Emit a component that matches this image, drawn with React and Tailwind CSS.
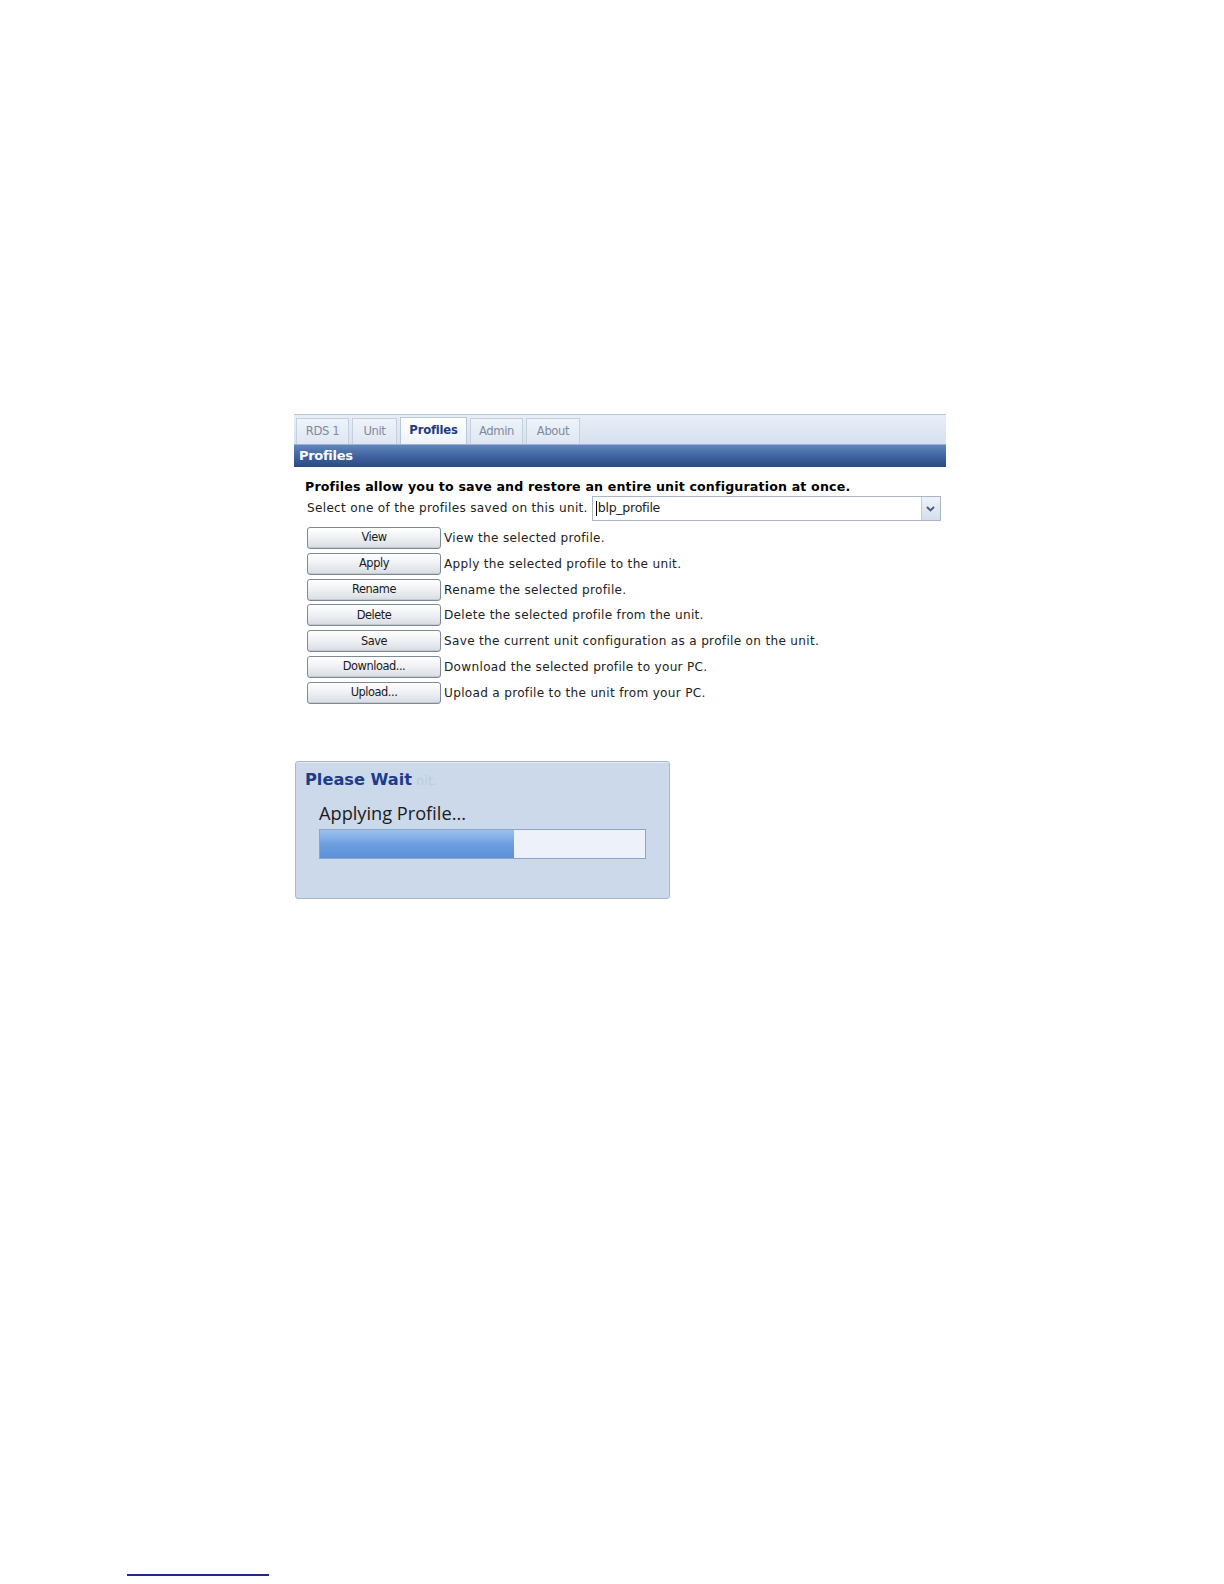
/**
 * Profiles page — tabbed unit configuration screen with a "Please Wait" dialog below.
 */

const TABS = [
  ["RDS 1", "w-[53px]"],
  ["Unit", "w-[45px]"],
  ["Profiles", "w-[67px]"],
  ["Admin", "w-[53px]"],
  ["About", "w-[54px]"],
];

const ACTIONS = [
  ["View", "View the selected profile."],
  ["Apply", "Apply the selected profile to the unit."],
  ["Rename", "Rename the selected profile."],
  ["Delete", "Delete the selected profile from the unit."],
  ["Save", "Save the current unit configuration as a profile on the unit."],
  ["Download...", "Download the selected profile to your PC."],
  ["Upload...", "Upload a profile to the unit from your PC."],
];

export default function App() {
  return (
    <div
      className="relative w-full h-[1584px] overflow-hidden bg-white text-black"
      style={{ fontFamily: '"DejaVu Sans", Verdana, sans-serif' }}
    >
      <div className="pt-[414px] pl-[294px]">
        <ProfilesPanel />
        <PleaseWait />
      </div>

      {/* footnote rule at the bottom of the page */}
      <div className="absolute left-[127px] top-[1574px] w-[142px] h-[2px] bg-[#1c2a8a]" />
    </div>
  );
}

function ProfilesPanel() {
  return (
    <div className="w-[652px]">
      {/* Tab strip */}
      <div className="flex items-end gap-[3px] h-[30px] pl-[2px] border-t border-[#b8c4d4] bg-gradient-to-b from-[#e9eef6] to-[#d6e0ee]">
        {TABS.map(([t, w]) => {
          const active = t === "Profiles";
          return (
            <div
              key={t}
              className={
                (active
                  ? "h-[27px] border-[#b9c7da] from-white to-[#eef3fa] font-bold text-[#1f3d7a] tracking-[-0.2px] "
                  : "h-[26px] border-[#c5d0de] from-[#eef3f9] to-[#dfe7f2] text-[#7d8aa0] tracking-[-0.4px] ") +
                w +
                " flex items-center justify-center border border-b-0 bg-gradient-to-b text-[11.6px]"
              }
            >
              {t}
            </div>
          );
        })}
      </div>

      {/* Section header */}
      <div className="h-[23px] flex items-center px-[5px] bg-gradient-to-b from-[#6286bb] via-[#3f64a0] to-[#2c4a82] border-t border-[#9ab2d6] text-white text-[13px] font-bold tracking-[-0.3px]">
        Profiles
      </div>

      <div className="pl-[11px] pt-[12px]">
        <p className="text-[12.6px] font-bold leading-[16px] tracking-[0.17px]">
          Profiles allow you to save and restore an entire unit configuration at once.
        </p>

        <div className="flex items-center mt-[1px] pl-[2px]">
          <span className="text-[12.1px] tracking-[0.3px] text-[#222] mr-[4px]">
            Select one of the profiles saved on this unit.
          </span>
          <div className="flex w-[349px] h-[25px] border border-[#a9b6c8] bg-white">
            <div className="flex-1 flex items-center pl-[3px] text-[12.6px] text-[#222] tracking-[-0.3px]">
              <span className="border-l border-black h-[15px] mr-[1px]" />
              blp_profile
            </div>
            <div className="w-[19px] flex items-center justify-center border-l border-[#c3cedd] bg-gradient-to-b from-[#eef3f9] to-[#d3deec]">
              <svg width="9" height="6" viewBox="0 0 9 6" fill="none" stroke="#4a5a74" strokeWidth="1.8">
                <path d="M1 1l3.5 3.5L8 1" />
              </svg>
            </div>
          </div>
        </div>

        <div className="flex flex-col gap-[3.8px] mt-[6px] pl-[2px]">
          {ACTIONS.map(([label, desc]) => (
            <div key={label} className="flex items-center">
              <button className="w-[134px] h-[22px] rounded-[3px] border border-[#7f8a99] bg-gradient-to-b from-white via-[#eef0f3] to-[#d8dce2] text-[11.4px] tracking-[-0.45px] text-[#1a1a1a] shadow-[inset_0_-1px_0_#c4c9d1]">
                {label}
              </button>
              <span className="ml-[3px] text-[12.1px] tracking-[0.3px] text-[#222]">{desc}</span>
            </div>
          ))}
        </div>
      </div>
    </div>
  );
}

function PleaseWait() {
  return (
    <div className="mt-[57px] ml-[1px] w-[375px] h-[138px] rounded-[3px] border border-[#a8b8cc] bg-[#cbd9ea] shadow-[inset_0_1px_0_#e3ebf5]">
      <div className="pl-[9px] pt-[6px] text-[16.2px] font-bold text-[#1d3c8c] leading-[24px]">
        Please Wait
        <span className="ml-[4px] font-normal text-[13px] text-[#bccbdf]">nit.</span>
      </div>
      <div
        className="pl-[23px] pt-[8px] text-[18.2px] text-[#1b1b1b] leading-[24px]"
        style={{ fontFamily: '"Open Sans", "DejaVu Sans", sans-serif' }}
      >
        Applying Profile...
      </div>
      <div className="ml-[23px] mt-[4px] w-[327px] h-[30px] border border-[#8aa5cf] bg-[#edf1f9] flex">
        <div className="h-full bg-gradient-to-b from-[#9cc0ec] via-[#6f9ee0] to-[#5b8fd8]" style={{ width: "194px" }} />
      </div>
    </div>
  );
}
